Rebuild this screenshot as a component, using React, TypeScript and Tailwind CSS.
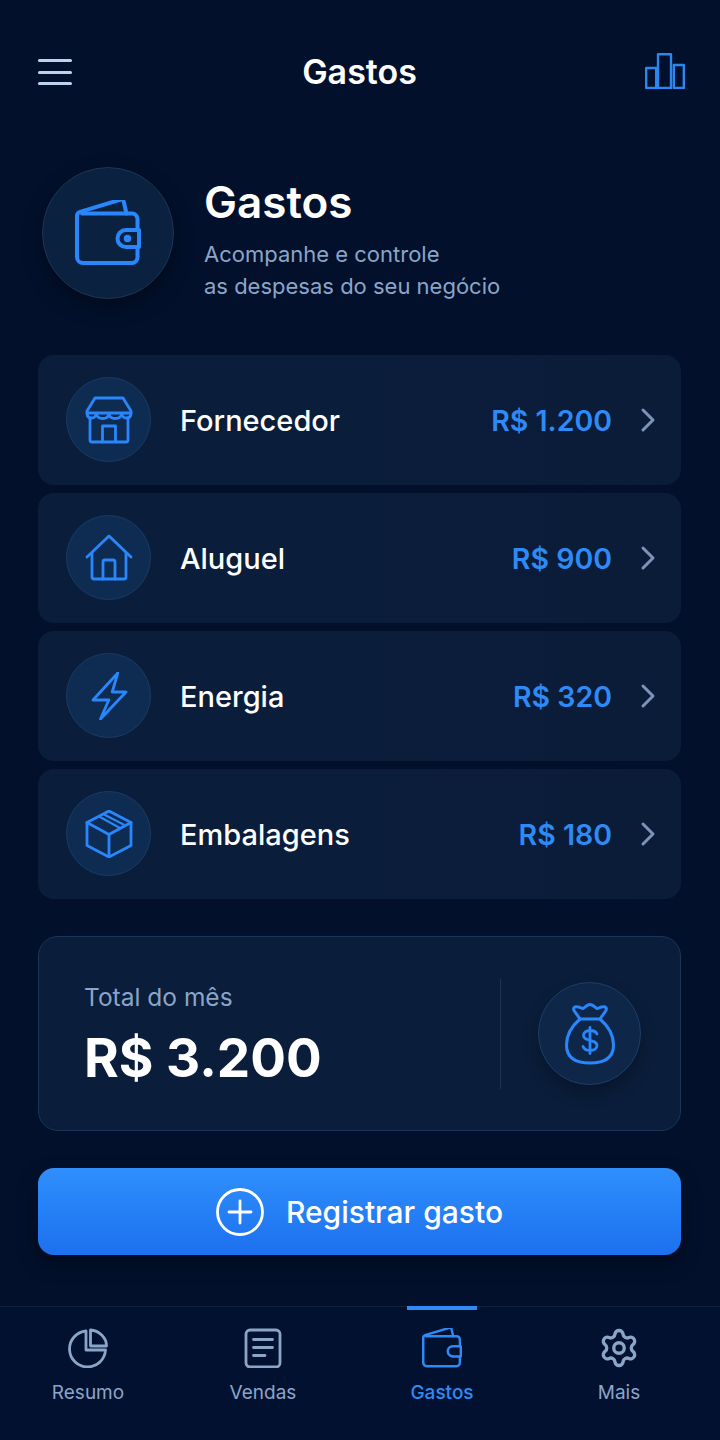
import { Settings } from 'lucide-react'
import type { ReactNode } from 'react'

const font = { fontFamily: 'Inter, sans-serif' }

function WalletIcon({ className, dot }: { className?: string; dot?: boolean }) {
  return (
    <svg viewBox="0 2 66 66" fill="none" stroke="currentColor" strokeWidth="4" strokeLinejoin="round" strokeLinecap="round" className={className}>
      <path d="M7 15.500H57a5.500 5.500 0 0 1 5.500 5.500V32M62.500 49V59.500a5.500 5.500 0 0 1-5.500 5.500H8a6 6 0 0 1-6-6V18" />
      <path d="M2 18c0-2 1-3.500 3-4.200L45 1.800c2-.6 3.400.2 3.800 2.200L51.500 15.500" />
      <path d="M64 32H51a8.500 8.500 0 0 0 0 17H64V32z" />
      {dot && <circle cx="52.500" cy="40.500" r="1.800" />}
    </svg>
  )
}

function StoreIcon() {
  return (
    <svg width="48" height="48" viewBox="0 0 48 48" fill="none" stroke="currentColor" strokeWidth="2.800" strokeLinejoin="round" strokeLinecap="round">
      <path d="M10 2H38L46 15V17H2V15Z" />
      <path d="M2 17c0 6.500 8 6.500 9.300 1c1.500 6 11.500 6 12.700 0c1.200 6 11.200 6 12.700 0c1.300 5.500 9.300 5.500 9.300-1" />
      <path d="M5 22V44a2 2 0 0 0 2 2H41a2 2 0 0 0 2-2V22" />
      <path d="M17.500 46V30H30.500V46" />
    </svg>
  )
}

function HouseIcon() {
  return (
    <svg width="48" height="48" viewBox="0 0 48 48" fill="none" stroke="currentColor" strokeWidth="2.800" strokeLinejoin="round" strokeLinecap="round">
      <path d="M2 23L24 2L46 23" />
      <path d="M7 19V43a2 2 0 0 0 2 2H39a2 2 0 0 0 2-2V19" />
      <path d="M18 45V28a2 2 0 0 1 2-2H28a2 2 0 0 1 2 2V45" />
    </svg>
  )
}

function BoltIcon() {
  return (
    <svg width="48" height="48" viewBox="0 0 48 48" fill="none" stroke="currentColor" strokeWidth="2.800" strokeLinejoin="round" strokeLinecap="round">
      <path d="M32.800 1L8 28H23.800L15.500 47L41 20H27.200Z" />
    </svg>
  )
}

function BoxIcon() {
  return (
    <svg width="48" height="48" viewBox="0 0 48 48" fill="none" stroke="currentColor" strokeWidth="2.800" strokeLinejoin="round" strokeLinecap="round">
      <path d="M24 1L46 12.500V35.500L24 47L2 35.500V12.500Z" />
      <path d="M2 12.500L24 24.500L46 12.500M24 24.500V47" />
      <path d="M14 6.500L35 18M19 4.500L38.500 14.500" strokeWidth="2" />
    </svg>
  )
}

function MoneyBagIcon() {
  return (
    <svg width="50" height="62" viewBox="0 0 50 62" fill="none" stroke="currentColor" strokeWidth="3" strokeLinejoin="round" strokeLinecap="round">
      <path d="M15 16L9 7.500C8 5 9.500 3.500 12 3.800C14.500 4 16 5 18 5.500C20 4 22.500 1.500 25 1.500C27.500 1.500 30 4 32 5.500C34 5 35.500 4 38 3.800C40.500 3.500 42 5 41 7.500L35 16" />
      <path d="M15 16H35" />
      <path d="M15 16C8 22 1.500 31 1.500 42C1.500 56 12 60 25 60C38 60 48.500 56 48.500 42C48.500 31 42 22 35 16" />
      <path d="M32 31C31 28.500 28.500 27.500 25 27.500C21 27.500 18.500 29.500 18.500 32.500C18.500 39 32 35.500 32 42.500C32 45.500 29 47.500 25 47.500C21.500 47.500 19 46 18 43.500M25 24.500V50.500" strokeWidth="2.800" />
    </svg>
  )
}

function PieIcon() {
  return (
    <svg width="40" height="40" viewBox="0 0 40 40" fill="none" stroke="currentColor" strokeWidth="2.800" strokeLinejoin="round" strokeLinecap="round">
      <path d="M18 3A18 18 0 1 0 37.500 22H18Z" />
      <path d="M22.500 2V18H38.500C38.500 9.500 31 2.500 22.500 2Z" />
    </svg>
  )
}

function NotesIcon() {
  return (
    <svg width="40" height="40" viewBox="0 0 40 40" fill="none" stroke="currentColor" strokeWidth="2.800" strokeLinejoin="round" strokeLinecap="round">
      <rect x="3" y="2" width="34" height="37" rx="4" />
      <path d="M10.500 11.500H29.500M10.500 19.500H29.500M10.500 27.500H22" />
    </svg>
  )
}

function ChartIcon() {
  return (
    <svg width="40" height="36" viewBox="0 0 40 36" fill="none" stroke="#2b87f0" strokeWidth="2.400" strokeLinejoin="round" className="mb-[3px]">
      <rect x="1.200" y="15" width="10" height="20" />
      <rect x="13" y="1.200" width="13" height="33.800" />
      <rect x="28.800" y="12" width="10" height="23" />
    </svg>
  )
}

type ExpenseRow = { label: string; value: string; icon: ReactNode }

const rows: ExpenseRow[] = [
  { label: 'Fornecedor', value: 'R$ 1.200', icon: <StoreIcon /> },
  { label: 'Aluguel', value: 'R$ 900', icon: <HouseIcon /> },
  { label: 'Energia', value: 'R$ 320', icon: <BoltIcon /> },
  { label: 'Embalagens', value: 'R$ 180', icon: <BoxIcon /> },
]

function Row({ label, value, icon }: ExpenseRow) {
  return (
    <div className="flex h-[130px] items-center rounded-2xl bg-gradient-to-r from-[#0a1e3c] to-[#0a1c38] pl-7 pr-6">
      <div className="mb-px flex h-[85px] w-[85px] items-center justify-center rounded-full border border-[#1c3a63] bg-[#0e2b52] text-[#2a86fb]">
        {icon}
      </div>
      <span className="ml-[29px] mt-[2px] flex-1 text-[29px] font-medium text-white">{label}</span>
      <span className="mt-[2px] text-[28.500px] font-semibold text-[#2e8bf5]">{value}</span>
      <svg width="18" height="28" viewBox="0 0 18 28" fill="none" stroke="#7d94b8" strokeWidth="3" strokeLinecap="round" strokeLinejoin="round" className="ml-[27px]">
        <path d="M4 4L14 14L4 24" />
      </svg>
    </div>
  )
}

function NavItem({ label, width, active, children }: { label: string; width: string; active?: boolean; children: ReactNode }) {
  return (
    <div className={`relative flex flex-col items-center pt-[21px] ${width} ${active ? 'text-[#2e8bf5]' : 'text-[#8ba5c8]'}`}>
      {active && <div className="absolute -top-px left-[57px] h-1 w-[70px] bg-[#2e8bf5]" />}
      <div className="flex h-[40px] items-center justify-center">{children}</div>
      <span className={`mt-[11px] text-[19px] ${active ? 'font-medium' : ''}`}>{label}</span>
    </div>
  )
}

export default function App() {
  return (
    <div style={font} className="flex h-[1440px] w-[720px] flex-col overflow-hidden bg-[#02102b]">
      <header className="flex h-[144px] items-center justify-between pl-[38px] pr-[35px]">
        <div className="flex w-[34px] flex-col gap-[8.500px]">
          <div className="h-[3px] rounded-full bg-[#bcd3f0]" />
          <div className="h-[3px] rounded-full bg-[#bcd3f0]" />
          <div className="h-[3px] rounded-full bg-[#bcd3f0]" />
        </div>
        <h1 className="ml-[2px] pb-[2px] text-[34px] font-semibold text-white">Gastos</h1>
        <ChartIcon />
      </header>

      <section className="mt-[23px] flex h-[132px] items-center pl-[42px]">
        <div className="flex h-[132px] w-[132px] shrink-0 items-center justify-center rounded-full border border-[#1c3557] bg-[#0b2140] text-[#2a86fb] shadow-[0_8px_20px_rgba(0,0,0,0.35)]">
          <WalletIcon dot className="h-[66px] w-[66px]" />
        </div>
        <div className="ml-[30px] pt-[12px]">
          <h2 className="text-[44px] font-semibold leading-[52px] text-white">Gastos</h2>
          <p className="mt-[10px] text-[22px] leading-[32px] text-[#8ba5c8]">
            Acompanhe e controle
            <br />
            as despesas do seu negócio
          </p>
        </div>
      </section>

      <section className="ml-[38px] mt-[56px] flex w-[643px] flex-col gap-2">
        {rows.map((row) => (
          <Row key={row.label} {...row} />
        ))}
      </section>

      <section className="ml-[38px] mt-[37px] flex h-[195px] w-[643px] items-center rounded-[20px] border border-[#1a3558] bg-[#0a1d3a] pl-[45px] pr-[39px]">
        <div className="flex-1 pt-[3px]">
          <p className="text-[24.500px] leading-[32px] text-[#8ba5c8]">Total do mês</p>
          <p className="mt-[13px] text-[53px] font-bold leading-[64px] text-white">R$ 3.200</p>
        </div>
        <div className="h-[110px] w-px bg-[#1a3558]" />
        <div className="ml-[37px] flex h-[103px] w-[103px] items-center justify-center rounded-full border border-[#1f3e68] bg-[#0e2648] text-[#2a86fb] shadow-[0_8px_16px_rgba(0,0,0,0.25)]">
          <MoneyBagIcon />
        </div>
      </section>

      <button className="ml-[38px] mt-[37px] flex h-[87px] w-[643px] items-center justify-center gap-[22px] rounded-2xl bg-gradient-to-b from-[#2f8ffc] to-[#1d70ee] text-[30px] font-medium text-white shadow-[0_8px_20px_rgba(0,0,0,0.35)]">
        <svg width="48" height="48" viewBox="0 0 48 48" fill="none" stroke="currentColor" strokeWidth="2.800" strokeLinecap="round">
          <circle cx="24" cy="24" r="22.500" />
          <path d="M24 13V35M13 24H35" />
        </svg>
        <span className="mt-[2px]">Registrar gasto</span>
      </button>

      <nav className="mt-[51px] flex flex-1 border-t border-[#12233f] bg-[#021130]">
        <NavItem label="Resumo" width="w-[176px]">
          <PieIcon />
        </NavItem>
        <NavItem label="Vendas" width="w-[174px]">
          <NotesIcon />
        </NavItem>
        <NavItem label="Gastos" width="w-[184px]" active>
          <WalletIcon className="h-[40px] w-[40px]" />
        </NavItem>
        <NavItem label="Mais" width="w-[170px]">
          <Settings size={42} strokeWidth={1.9} />
        </NavItem>
      </nav>
    </div>
  )
}
